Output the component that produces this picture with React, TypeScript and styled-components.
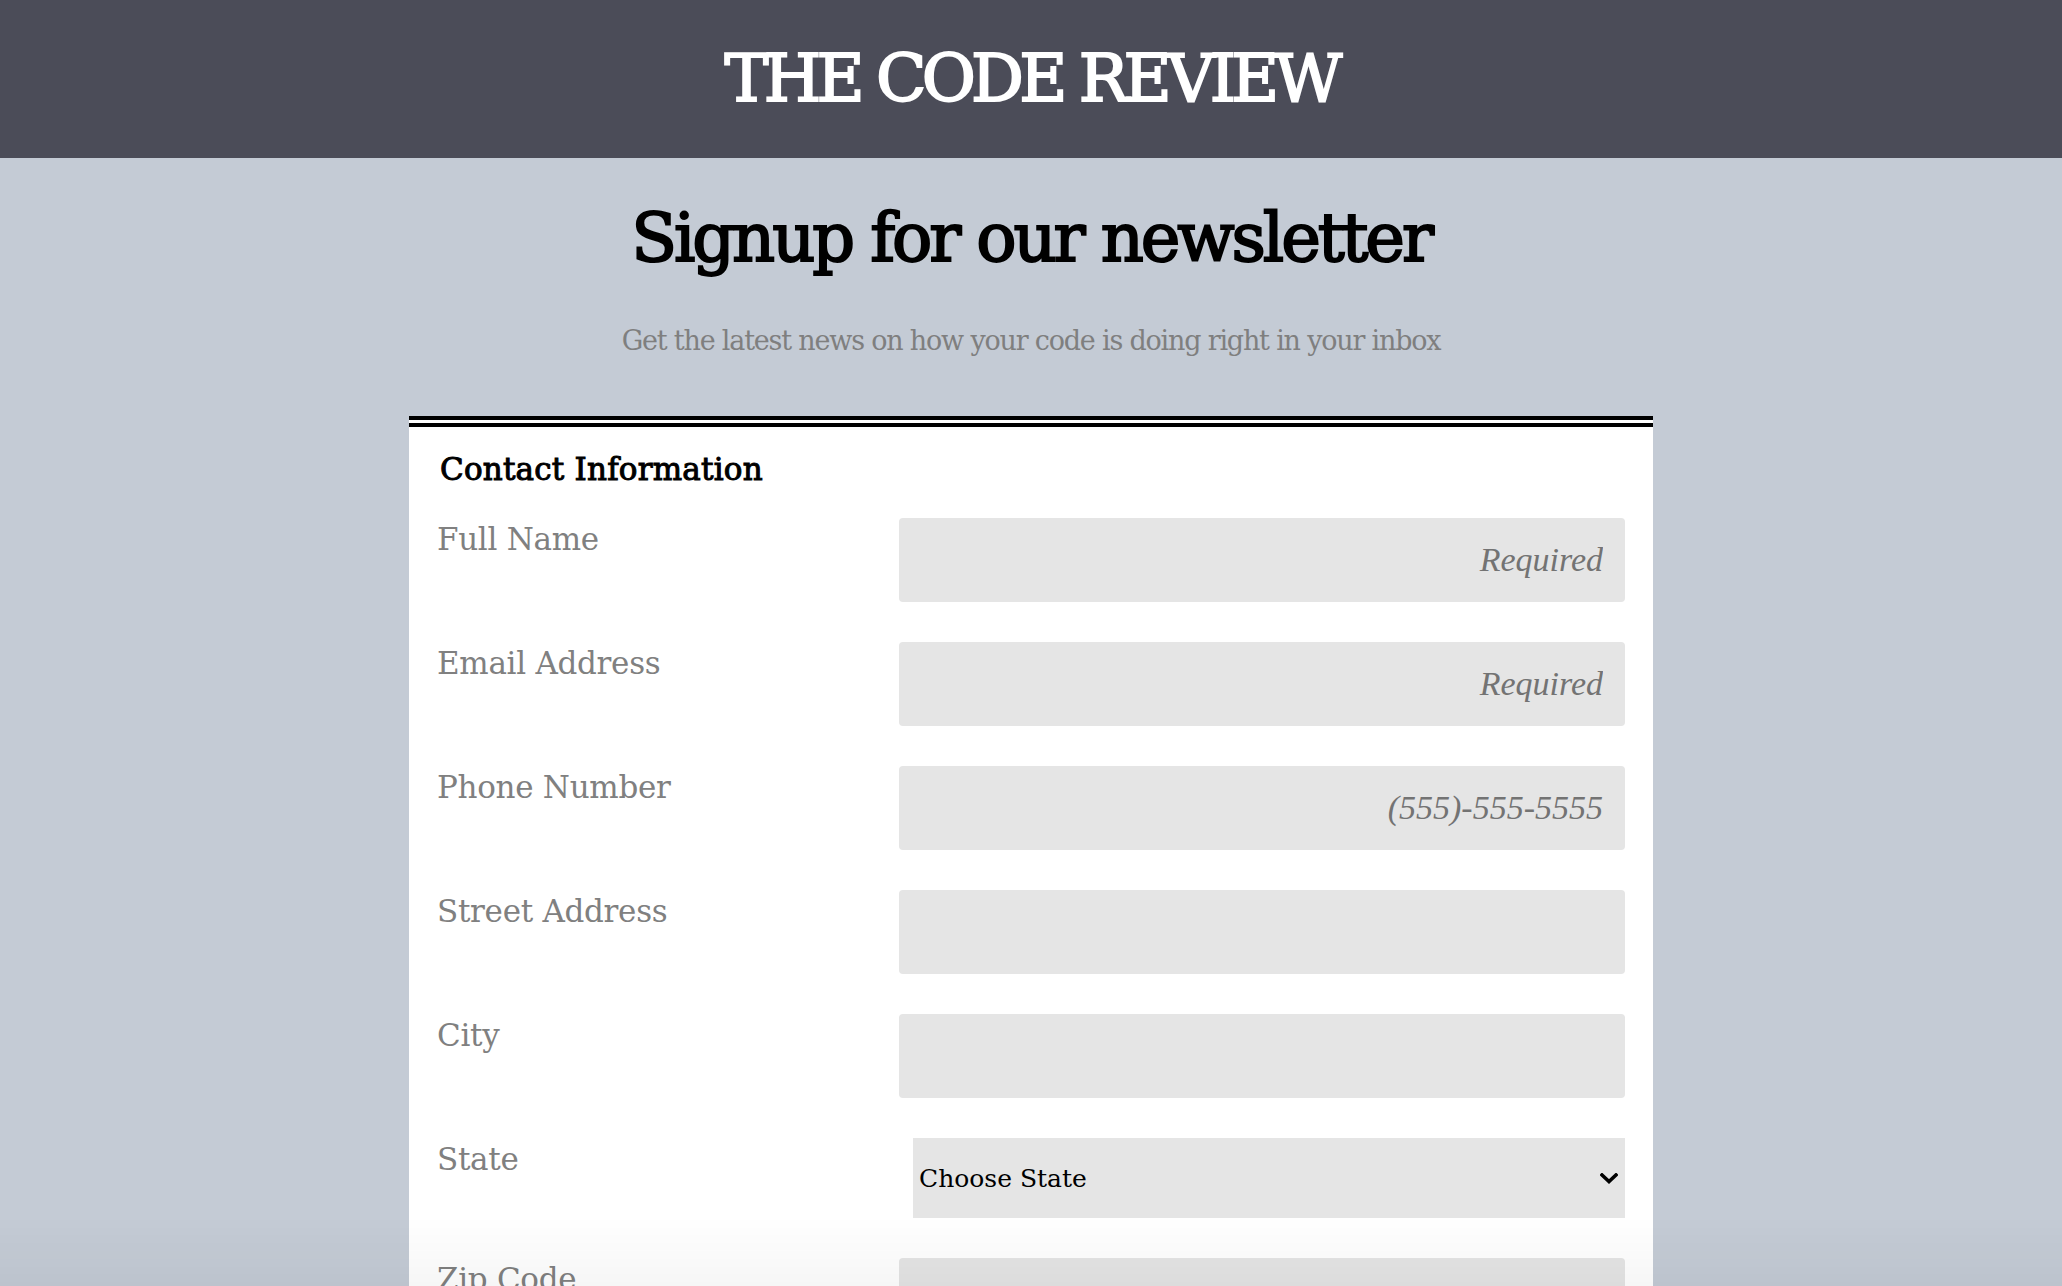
import React from "react";
import styled, { createGlobalStyle } from "styled-components";

const Global = createGlobalStyle`
  html, body { margin: 0; padding: 0; }
  body {
    background: #c4cbd5;
    font-family: "DejaVu Serif", "Liberation Serif", serif;
  }
  * { box-sizing: border-box; }
`;

const Header = styled.header`
  height: 158px;
  background: #4b4c58;
  display: flex;
  align-items: center;
  justify-content: center;
`;

const Title = styled.h1`
  margin: 0;
  color: #ffffff;
  font-size: 66px;
  line-height: 1;
  font-weight: 400;
  letter-spacing: -4.8px;
  -webkit-text-stroke: 2px #ffffff;
`;

const Main = styled.main`
  display: flex;
  flex-direction: column;
  align-items: center;
`;

const Heading = styled.h2`
  margin: 47px 0 0;
  font-size: 67px;
  line-height: 1;
  font-weight: 400;
  color: #000;
  letter-spacing: -3.1px;
  -webkit-text-stroke: 2px #000;
`;

const Sub = styled.p`
  margin: 55px 0 0;
  font-size: 27px;
  line-height: 1;
  color: #7f7f7f;
  letter-spacing: -1.2px;
`;

const Card = styled.form`
  margin-top: 62px;
  width: 1244px;
  background: #fff;
  border-top: 11px double #000;
  padding: 27px 28px 40px;
`;

const Legend = styled.h3`
  margin: 0 0 33px 3px;
  font-size: 31px;
  line-height: 1;
  font-weight: 400;
  color: #000;
  letter-spacing: 0.2px;
  -webkit-text-stroke: 1px #000;
`;

const Row = styled.div`
  display: grid;
  grid-template-columns: 462px 1fr;
  margin-bottom: 40px;
`;

const Label = styled.label`
  padding-top: 6px;
  font-size: 31px;
  line-height: 1;
  color: #808080;
  letter-spacing: -0.3px;
`;

const Input = styled.input`
  height: 84px;
  width: 100%;
  border: none;
  border-radius: 4px;
  background: #e5e5e5;
  padding: 0 22px;
  font-family: inherit;
  font-size: 31px;
  text-align: right;
  outline: none;
  &::placeholder {
    font-family: "Liberation Serif", serif;
    font-size: 34px;
    font-style: italic;
    color: #737373;
  }
`;

const SelectWrap = styled.div`
  position: relative;
  margin-left: 14px;
`;

const Select = styled.select`
  appearance: none;
  width: 100%;
  height: 80px;
  border: none;
  border-radius: 0;
  background: #e5e5e5;
  padding: 0 6px;
  font-family: inherit;
  font-size: 25px;
  color: #000;
  outline: none;
`;

const Chevron = styled.svg`
  position: absolute;
  right: 7px;
  top: 35px;
  pointer-events: none;
`;

const Fade = styled.div`
  position: fixed;
  left: 0;
  right: 0;
  bottom: 0;
  height: 70px;
  pointer-events: none;
  background: linear-gradient(to bottom, rgba(0, 0, 0, 0), rgba(0, 0, 0, 0.035));
`;

const fields: { label: string; placeholder?: string }[] = [
  { label: "Full Name", placeholder: "Required" },
  { label: "Email Address", placeholder: "Required" },
  { label: "Phone Number", placeholder: "(555)-555-5555" },
  { label: "Street Address" },
  { label: "City" },
];

export default function App() {
  return (
    <>
      <Global />
      <Header>
        <Title>THE CODE REVIEW</Title>
      </Header>
      <Main>
        <Heading>Signup for our newsletter</Heading>
        <Sub>Get the latest news on how your code is doing right in your inbox</Sub>
        <Card onSubmit={(e) => e.preventDefault()}>
          <Legend>Contact Information</Legend>
          {fields.map((f) => (
            <Row key={f.label}>
              <Label>{f.label}</Label>
              <Input placeholder={f.placeholder ?? ""} />
            </Row>
          ))}
          <Row>
            <Label>State</Label>
            <SelectWrap>
              <Select defaultValue="">
                <option value="">Choose State</option>
                <option>Alabama</option>
                <option>Alaska</option>
                <option>Arizona</option>
                <option>California</option>
                <option>New York</option>
                <option>Texas</option>
              </Select>
              <Chevron width="18" height="11" viewBox="0 0 18 11">
                <path d="M2 2 L9 8.5 L16 2" fill="none" stroke="#000" strokeWidth="3.6" strokeLinecap="square" />
              </Chevron>
            </SelectWrap>
          </Row>
          <Row>
            <Label>Zip Code</Label>
            <Input />
          </Row>
        </Card>
      </Main>
      <Fade />
    </>
  );
}
